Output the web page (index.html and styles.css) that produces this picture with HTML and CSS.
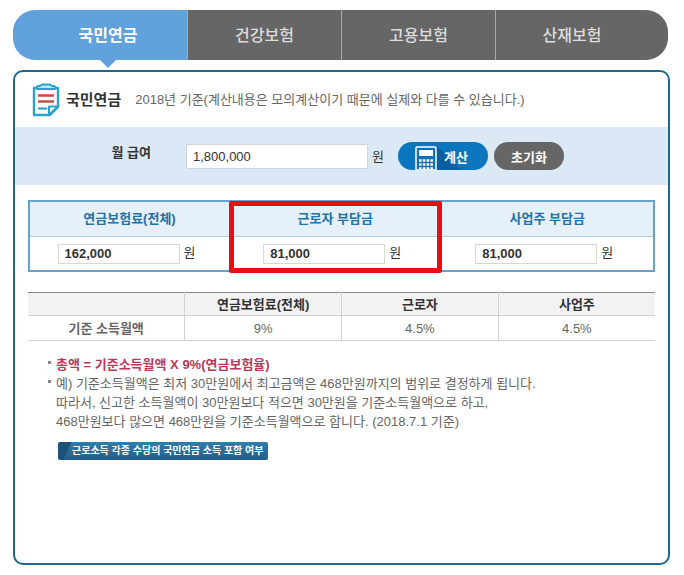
FILE: index.html
```
<!DOCTYPE html>
<html lang="ko">
<head>
    <meta charset="UTF-8">
    <meta name="viewport" content="width=device-width, initial-scale=1.0">
    <title>국민연금</title>
    <link rel="stylesheet" href="styles.css">
</head>
<body>
    <nav class="tabs">
        <a href="#pension" class="tab active">국민연금</a>
        <a href="#health" class="tab">건강보험</a>
        <a href="#employ" class="tab">고용보험</a>
        <a href="#accident" class="tab">산재보험</a>
    </nav>
    <main class="panel" id="pension">
        <div class="panel-head">
            <svg class="doc-icon" width="28" height="34" viewBox="0 0 28 34" fill="none">
                <path d="M6 5H2V32H18L26 24V5H22" stroke="#29a3cb" stroke-width="2.4" stroke-linejoin="round"/>
                <path d="M5 6V4Q5 3 6 3H8L10 1.500H18L20 3H22Q23 3 23 4V6Z" fill="#bfe4f1" stroke="#29a3cb" stroke-width="1.800" stroke-linejoin="round"/>
                <path d="M17 32V23.500H26Z" stroke="#29a3cb" stroke-width="2.200" stroke-linejoin="round"/>
                <path d="M6 12.500H22M6 18.500H22" stroke="#c0503f" stroke-width="2.600"/>
                <path d="M6 25.500H15" stroke="#29a3cb" stroke-width="2.200"/>
            </svg>
            <h1 class="title">국민연금</h1>
            <p class="basis">2018년 기준(계산내용은 모의계산이기 때문에 실제와 다를 수 있습니다.)</p>
        </div>
        <form class="salary">
            <label for="salary" class="salary-label">월 급여</label>
            <input type="text" id="salary" class="salary-input" value="1,800,000">
            <span class="won">원</span>
            <button type="button" class="btn btn-calc">
                <svg class="calc-icon" width="46" height="28" viewBox="0 0 46 28">
                    <path d="M22 4L46 28H0V24Z" fill="#075f9f"/>
                    <path d="M1 28V6Q1 5 2 5H20Q21 5 21 6V28Z" fill="#0a72b8" stroke="#fff" stroke-width="1.500"/>
                    <rect x="4" y="8" width="14" height="6" fill="#fff"/>
                    <path d="M4 18.500H18M4 22.500H18M4 26.500H18" stroke="#fff" stroke-width="2.500" stroke-dasharray="2.600 1.200"/>
                </svg>
                계산
            </button>
            <button type="reset" class="btn btn-reset">초기화</button>
        </form>
        <table class="result">
            <thead>
                <tr>
                    <th id="total" class="col-total">연금보험료(전체)</th>
                    <th id="worker" class="col-worker">근로자 부담금</th>
                    <th id="owner">사업주 부담금</th>
                </tr>
            </thead>
            <tbody>
                <tr>
                    <td><input type="text" class="amount" aria-labelledby="total" value="162,000" readonly><span class="unit">원</span></td>
                    <td class="marked"><input type="text" class="amount" aria-labelledby="worker" value="81,000" readonly><span class="unit">원</span></td>
                    <td><input type="text" class="amount" aria-labelledby="owner" value="81,000" readonly><span class="unit">원</span></td>
                </tr>
            </tbody>
        </table>
        <table class="rates">
            <thead>
                <tr>
                    <td></td>
                    <th>연금보험료(전체)</th>
                    <th>근로자</th>
                    <th>사업주</th>
                </tr>
            </thead>
            <tbody>
                <tr>
                    <th>기준 소득월액</th>
                    <td>9%</td>
                    <td>4.5%</td>
                    <td>4.5%</td>
                </tr>
            </tbody>
        </table>
        <ul class="notes">
            <li class="formula">총액 = 기준소득월액 X 9%(연금보험율)</li>
            <li>예) 기준소득월액은 최저 30만원에서 최고금액은 468만원까지의 범위로 결정하게 됩니다.<br>
                따라서, 신고한 소득월액이 30만원보다 적으면 30만원을 기준소득월액으로 하고,<br>
                468만원보다 많으면 468만원을 기준소득월액으로 합니다. (2018.7.1 기준)</li>
        </ul>
        <a href="#allowance" class="more">근로소득 각종 수당의 국민연금 소득 포함 여부</a>
    </main>
</body>
</html>
```
FILE: styles.css
```
*{
    box-sizing: border-box;
}
body{
    margin: 0;
    padding: 10px 14px 10px 13px;
    min-height: 100vh;
    display: flex;
    flex-direction: column;
    background-color: #fff;
    color: #666;
    font-family: "Liberation Sans", "Noto Sans CJK KR", sans-serif;
    font-size: 13px;
    line-height: 19px;
}
input,button{
    font-family: inherit;
    font-size: 13px;
}
table{
    border-collapse: collapse;
    table-layout: fixed;
}

/* tabs */
.tabs{
    display: grid;
    grid-template-columns: 174fr 154fr 154fr 173fr;
    height: 50px;
    margin-right: 2px;
}
.tab{
    display: flex;
    align-items: center;
    justify-content: center;
    background-color: #666;
    border-left: 1px solid #aaa;
    color: #ddd;
    font-size: 16px;
    font-weight: 500;
    text-decoration: none;
}
.tab.active{
    position: relative;
    padding-left: 16px;
    background-color: #61a1dc;
    border-left: none;
    border-radius: 22px 0 0 22px;
    color: #fff;
    font-weight: bold;
}
.tab.active::after{
    content: "";
    position: absolute;
    top: 100%;
    left: 50%;
    border: 8px solid transparent;
    border-top-color: #61a1dc;
    border-bottom: none;
}
.tab:last-child{
    padding-right: 20px;
    border-radius: 0 22px 22px 0;
}

/* panel */
.panel{
    flex: 1;
    margin-top: 10px;
    border: 2px solid #1d6891;
    border-radius: 10px;
}
.panel-head{
    display: flex;
    align-items: center;
    height: 55px;
    padding: 0 17px;
}
.title{
    margin: 0 14px 0 6px;
    color: #333;
    font-size: 15px;
}
.basis{
    margin: 0;
}
.salary{
    display: flex;
    align-items: center;
    height: 58px;
    background-color: #dbe9f7;
    color: #333;
}
.salary-label{
    width: 171px;
    padding: 0 35px 8px 0;
    font-weight: bold;
    text-align: right;
}
.salary-input{
    width: 182px;
    height: 25px;
    padding: 0 6px;
    border: 1px solid #ccd5dd;
    color: #333;
}
.won{
    margin: 0 14px 0 4px;
}
.btn{
    height: 28px;
    padding: 0;
    border: none;
    border-radius: 14px;
    color: #fff;
    font-weight: bold;
    cursor: pointer;
}
.btn-calc{
    display: flex;
    align-items: center;
    width: 90px;
    padding-left: 17px;
    overflow: hidden;
    background-color: #0a76bd;
}
.calc-icon{
    flex: none;
    margin-right: -17px;
}
.btn-reset{
    width: 70px;
    margin-left: 6px;
    background-color: #666;
}

/* result */
.result{
    width: calc(100% - 26px);
    margin: 15px 13px 0;
    border: 2px solid #67a2cd;
}
.result th{
    height: 35px;
    padding: 0;
    background-color: #e6f0fb;
    border-bottom: 1px solid #b4cfe2;
    color: #2272a5;
}
.result td{
    height: 35px;
    padding: 0 6px 0 0;
    text-align: center;
    color: #333;
}
.result .col-total{
    width: 32%;
}
.result .col-worker{
    width: 34%;
}
.amount{
    width: 122px;
    height: 20px;
    padding: 0 6px;
    border: 1px solid #d5d9d2;
    color: #333;
    font-weight: bold;
    vertical-align: middle;
}
.unit{
    margin-left: 4px;
}
.marked{
    position: relative;
}
/* red frame over the whole worker column */
.marked::after{
    content: "";
    position: absolute;
    top: -36px;
    right: 0;
    bottom: -3px;
    left: 0;
    border: 5px solid #e60f14;
    border-radius: 2px;
    pointer-events: none;
}

/* rates */
.rates{
    width: calc(100% - 26px);
    margin: 20px 13px 0;
    border-top: 1px solid #888;
    text-align: center;
}
.rates th,.rates td{
    height: 25px;
    padding: 0;
    border-bottom: 1px solid #d2d2d2;
    border-left: 1px solid #d2d2d2;
}
.rates th:first-child,.rates td:first-child{
    border-left: none;
}
.rates thead th,.rates thead td{
    height: 23px;
    background-color: #f2f2f2;
    color: #333;
}

/* notes */
.notes{
    margin: 14px 0 0;
    padding: 0 13px 0 41px;
    list-style: none;
}
.notes li{
    position: relative;
}
.notes li::before{
    content: "";
    position: absolute;
    top: 6px;
    left: -8px;
    width: 3px;
    height: 3px;
    background-color: #888;
}
.notes .formula{
    color: #b83a58;
    font-weight: bold;
}
.more{
    display: inline-block;
    margin: 11px 0 0 43px;
    padding: 0 5px 0 14px;
    border-radius: 2px;
    background: linear-gradient(115deg, #1d5379 12px, transparent 13px), linear-gradient(#2e7eae, #215f88);
    color: #fff;
    font-size: 10px;
    font-weight: bold;
    line-height: 18px;
    text-decoration: none;
}
```
